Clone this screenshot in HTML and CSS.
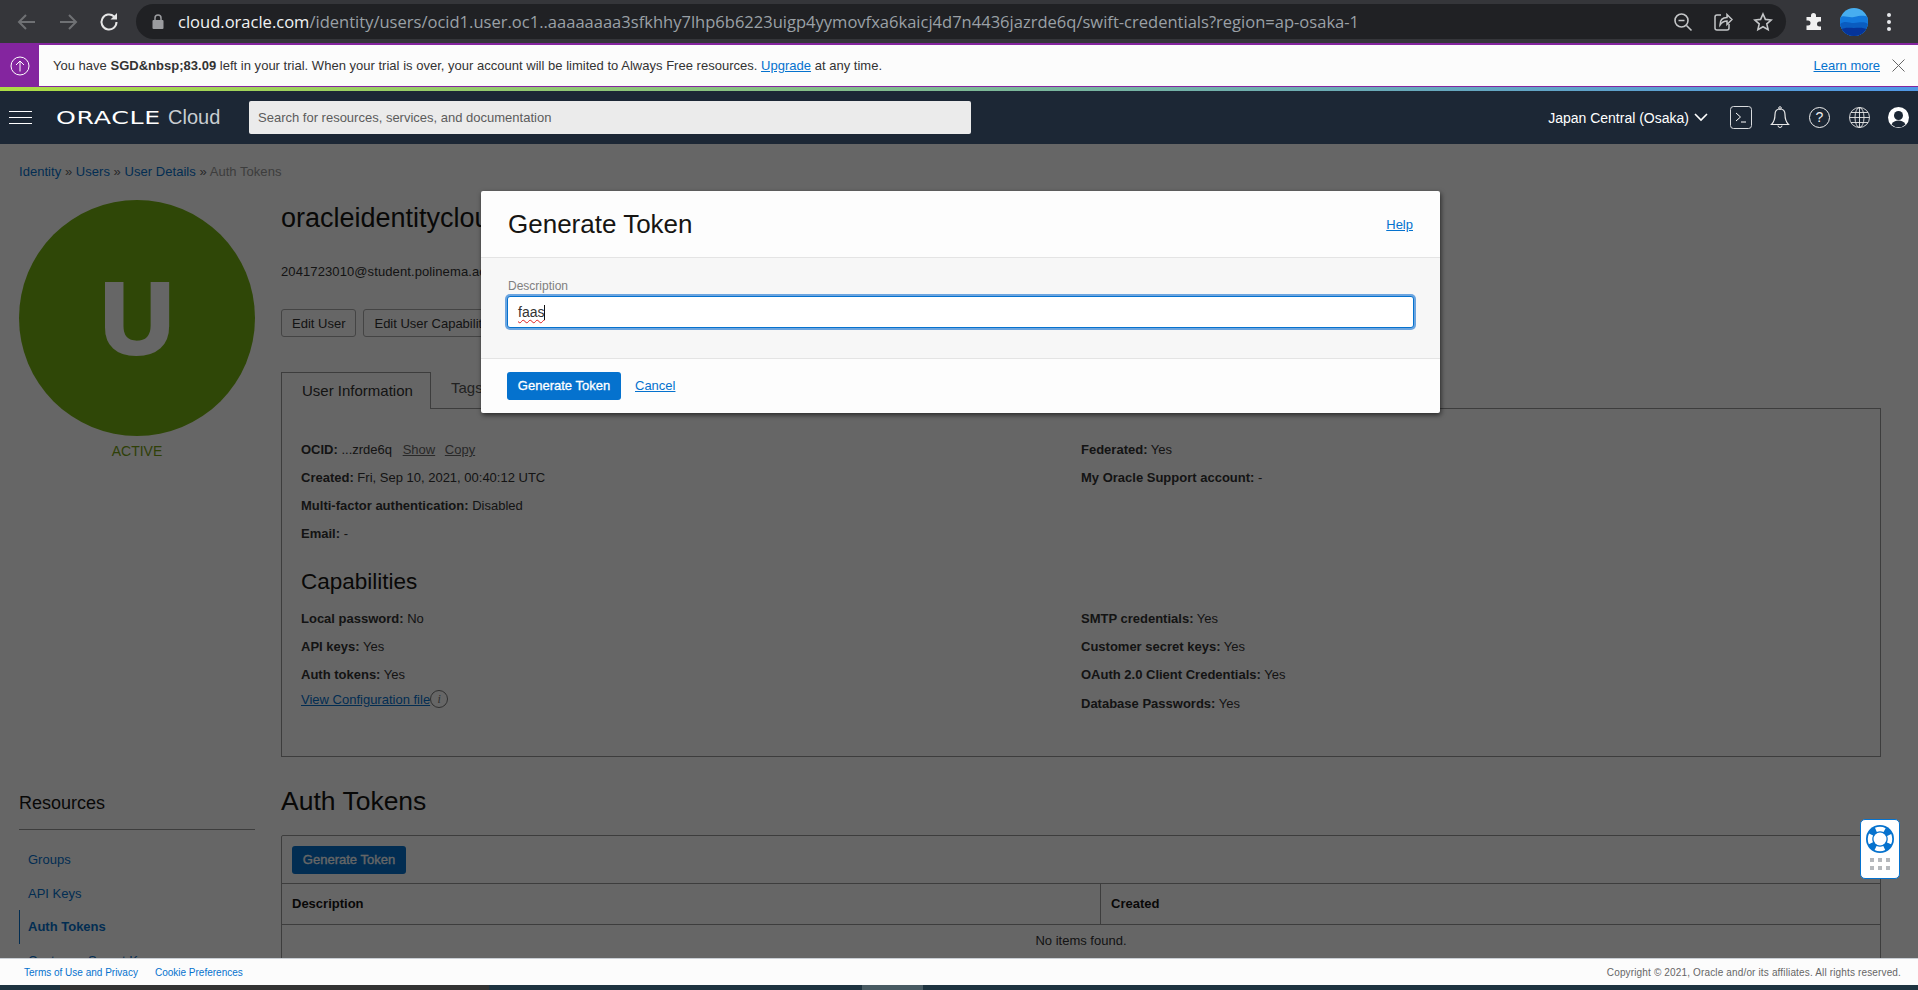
FILE: index.html
```html
<!DOCTYPE html>
<html lang="en">
<head>
  <meta charset="UTF-8" />
  <title>Auth Tokens - Oracle Cloud</title>
  <link rel="stylesheet" href="styles.css">
</head>
<body>

<div class="browser-bar">
  <svg class="bicon back" width="24" height="24" viewBox="0 0 24 24"><path d="M20 12H5M11 5l-7 7 7 7" fill="none" stroke="#6f7174" stroke-width="2"/></svg>
  <svg class="bicon forward" width="24" height="24" viewBox="0 0 24 24"><path d="M4 12h15M13 5l7 7-7 7" fill="none" stroke="#6f7174" stroke-width="2"/></svg>
  <svg class="bicon reload" width="24" height="24" viewBox="0 0 24 24"><path d="M19.5 12a7.5 7.5 0 1 1-2.4-5.5" fill="none" stroke="#e6e6e6" stroke-width="2"/><path d="M20 3v6.5h-6.500z" fill="#e6e6e6"/></svg>
  <div class="url-pill">
    <svg width="12" height="15" viewBox="0 0 12 15"><path d="M3 6V4a3 3 0 0 1 6 0v2" fill="none" stroke="#9b9c9f" stroke-width="1.500"/><rect x="0.500" y="6" width="11" height="9" rx="1" fill="#9b9c9f"/></svg>
    <div class="url"><span class="url-host">cloud.oracle.com</span>/identity/users/ocid1.user.oc1..aaaaaaaa3sfkhhy7lhp6b6223uigp4yymovfxa6kaicj4d7n4436jazrde6q/swift-credentials?region=ap-osaka-1</div>
    <svg class="pill-icon" width="20" height="20" viewBox="0 0 20 20"><circle cx="8.500" cy="8.500" r="6.500" fill="none" stroke="#c4c6c8" stroke-width="1.600"/><path d="M13.500 13.500l5 5M5.500 8.500h6" stroke="#c4c6c8" stroke-width="1.600"/></svg>
    <svg class="pill-icon" width="20" height="20" viewBox="0 0 20 20"><path d="M8 3H4a2 2 0 0 0-2 2v11a2 2 0 0 0 2 2h10a2 2 0 0 0 2-2v-4" fill="none" stroke="#c4c6c8" stroke-width="1.500"/><path d="M7 13c0-5 3-7.500 7-7.500V2.500l5 5-5 5V9c-3 0-5 1-7 4z" fill="none" stroke="#c4c6c8" stroke-width="1.500"/></svg>
    <svg class="pill-icon" width="20" height="20" viewBox="0 0 20 20"><path d="M10 2l2.400 5.400 5.800.6-4.400 3.900 1.300 5.700L10 14.700l-5.100 2.900 1.300-5.700L1.800 8l5.800-.6z" fill="none" stroke="#c4c6c8" stroke-width="1.600"/></svg>
  </div>
  <svg class="puzzle" width="20" height="20" viewBox="0 0 20 20"><path d="M7 3.500a2.500 2.500 0 0 1 5 0V5h5v4.500h-1.500a2.500 2.500 0 0 0 0 5H17V18H2.500v-4.500H4a2.500 2.500 0 0 0 0-5H2.500V5H7z" fill="#f1f1f1"/></svg>
  <svg class="profile" width="28" height="28" viewBox="0 0 28 28">
    <clipPath id="profile-clip"><circle cx="14" cy="14" r="14"/></clipPath>
    <g clip-path="url(#profile-clip)">
      <rect width="28" height="28" fill="#47aef0"/>
      <path d="M0 9c5-2 8 1 14 0s9-2 14 0v19H0z" fill="#1278dc"/>
      <path d="M0 16c5-4 9-1 14-1s9-2 14 1v12H0z" fill="#0a5cc0"/>
      <path d="M0 22c5-3 9-2 14-2s9-1 14 2v6H0z" fill="#05349a"/>
    </g>
  </svg>
  <div class="kebab"><i></i><i></i><i></i></div>
</div>

<div class="trial-banner">
  <div class="trial-icon">
    <svg width="20" height="20" viewBox="0 0 20 20"><circle cx="10" cy="10" r="9" fill="none" stroke="#fff" stroke-width="1"/><path d="M10 15.500V5M6 9l4-4 4 4" fill="none" stroke="#fff" stroke-width="1"/></svg>
  </div>
  <div class="trial-text">You have <b>SGD&amp;nbsp;83.09</b> left in your trial. When your trial is over, your account will be limited to Always Free resources. <a href="#">Upgrade</a> at any time.</div>
  <a class="learn-more" href="#">Learn more</a>
  <svg class="trial-close" width="13" height="13" viewBox="0 0 13 13"><path d="M.5.500l12 12M12.500.500l-12 12" stroke="#666" stroke-width="1"/></svg>
</div>
<div class="rainbow"></div>

<nav class="console-nav">
  <div class="hamburger"><i></i><i></i><i></i></div>
  <div class="logo"><span class="logo-oracle">ORACLE</span><span class="logo-cloud">Cloud</span></div>
  <input class="search" type="text" placeholder="Search for resources, services, and documentation" />
  <div class="region">Japan Central (Osaka)
    <svg width="14" height="9" viewBox="0 0 14 9"><path d="M1 1l6 6 6-6" fill="none" stroke="#fff" stroke-width="1.600"/></svg>
  </div>
  <svg class="nav-icon terminal" width="22" height="23" viewBox="0 0 22 23"><rect x=".5" y=".5" width="21" height="22" rx="3" fill="none" stroke="#d8dbde"/><path d="M6 7l4.500 4L6 15M11 16h5" fill="none" stroke="#fff"/></svg>
  <svg class="nav-icon bell" width="20" height="23" viewBox="0 0 20 23"><path d="M10 3c-3.500 0-5 2.500-5 5.500 0 5-1.500 8-3.500 10h17c-2-2-3.500-5-3.500-10C15 5.500 13.500 3 10 3z" fill="none" stroke="#e8e8e8" stroke-width="1.200"/><circle cx="10" cy="2" r="1.300" fill="none" stroke="#e8e8e8"/><path d="M8 19.500a2 2 0 0 0 4 0" fill="none" stroke="#e8e8e8"/></svg>
  <svg class="nav-icon" width="21" height="21" viewBox="0 0 21 21"><circle cx="10.500" cy="10.500" r="10" fill="none" stroke="#f0f0f0"/><text x="10.500" y="15" text-anchor="middle" class="help-mark">?</text></svg>
  <svg class="nav-icon" width="21" height="21" viewBox="0 0 21 21"><g fill="none" stroke="#e8e8e8" stroke-width=".9"><circle cx="10.500" cy="10.500" r="10"/><ellipse cx="10.500" cy="10.500" rx="4.500" ry="10"/><path d="M10.500.5v20M.5 10.500h20M2 5.500h17M2 15.500h17"/></g></svg>
  <svg class="nav-icon last" width="21" height="21" viewBox="0 0 21 21"><circle cx="10.500" cy="10.500" r="10.500" fill="#fff"/><circle cx="10.500" cy="8.500" r="4.500" fill="#1c2735"/><path d="M3.500 17.500c1.500-3 4-4 7-4s5.500 1 7 4a10 10 0 0 1-14 0z" fill="#1c2735"/></svg>
</nav>

<main class="page">
  <div class="breadcrumb"><a href="#">Identity</a> » <a href="#">Users</a> » <a href="#">User Details</a> » <span class="crumb-current">Auth Tokens</span></div>

  <section class="top-row">
    <div class="avatar-col">
      <div class="avatar">U</div>
      <div class="status">ACTIVE</div>
    </div>
    <div class="details">
      <h1>oracleidentitycloudservice/2041723010@student.polinema.ac.id</h1>
      <div class="email">2041723010@student.polinema.ac.id</div>
      <div class="actions">
        <button class="btn">Edit User</button>
        <button class="btn">Edit User Capabilities</button>
      </div>
      <div class="tabs">
        <div class="tab active">User Information</div>
        <div class="tab">Tags</div>
      </div>
      <div class="panel">
        <div class="info-grid">
          <div>
            <p><b>OCID:</b> ...zrde6q <a class="muted-link first" href="#">Show</a> <a class="muted-link" href="#">Copy</a></p>
            <p><b>Created:</b> Fri, Sep 10, 2021, 00:40:12 UTC</p>
            <p><b>Multi-factor authentication:</b> Disabled</p>
            <p><b>Email:</b> -</p>
          </div>
          <div>
            <p><b>Federated:</b> Yes</p>
            <p><b>My Oracle Support account:</b> -</p>
          </div>
        </div>
        <h3>Capabilities</h3>
        <div class="info-grid">
          <div>
            <p><b>Local password:</b> No</p>
            <p><b>API keys:</b> Yes</p>
            <p><b>Auth tokens:</b> Yes</p>
            <div class="config-line"><a href="#">View Configuration file</a><span class="info-i">i</span></div>
          </div>
          <div>
            <p><b>SMTP credentials:</b> Yes</p>
            <p><b>Customer secret keys:</b> Yes</p>
            <p><b>OAuth 2.0 Client Credentials:</b> Yes</p>
            <p class="db-row"><b>Database Passwords:</b> Yes</p>
          </div>
        </div>
      </div>
    </div>
  </section>

  <section class="bottom-row">
    <aside class="resources">
      <h4>Resources</h4>
      <ul>
        <li><a href="#">Groups</a></li>
        <li><a href="#">API Keys</a></li>
        <li class="current"><a href="#">Auth Tokens</a></li>
        <li><a href="#">Customer Secret Keys</a></li>
      </ul>
    </aside>
    <div class="tokens">
      <h2>Auth Tokens</h2>
      <div class="table-box">
        <div class="toolbar"><button class="btn primary">Generate Token</button></div>
        <table>
          <tr><th class="col-desc">Description</th><th>Created</th></tr>
          <tr><td colspan="2">No items found.</td></tr>
        </table>
      </div>
    </div>
  </section>

  <div class="overlay">
    <div class="modal">
      <div class="modal-head">
        <div class="modal-title">Generate Token</div>
        <a href="#">Help</a>
      </div>
      <div class="modal-body">
        <label>Description</label>
        <div class="text-field"><span class="typed">faas</span><span class="caret"></span></div>
      </div>
      <div class="modal-foot">
        <button class="btn primary">Generate Token</button>
        <a class="cancel" href="#">Cancel</a>
      </div>
    </div>
  </div>

  <div class="help-widget">
    <svg width="28" height="28" viewBox="0 0 28 28">
      <circle cx="14" cy="14" r="14" fill="#0572ce"/>
      <circle cx="14" cy="14" r="10" fill="none" stroke="#fff" stroke-width="4.500" stroke-dasharray="9 6.700" stroke-dashoffset="4.500"/>
      <circle cx="14" cy="14" r="6.500" fill="#fff"/>
    </svg>
    <div class="grip"><i></i><i></i><i></i><i></i><i></i><i></i></div>
  </div>
</main>

<footer class="page-foot">
  <a href="#">Terms of Use and Privacy</a>
  <a href="#">Cookie Preferences</a>
  <span class="copyright">Copyright © 2021, Oracle and/or its affiliates. All rights reserved.</span>
</footer>
<div class="desktop-strip"></div>

</body>
</html>
```

FILE: styles.css
```css
html, body {
  height: 990px;
  margin: 0;
  overflow: hidden;
}
body {
  display: flex;
  flex-direction: column;
  font-family: 'Liberation Sans', Arial, sans-serif;
  font-size: 13px;
  color: #333;
  background: #fff;
}
a {
  color: #0572ce;
}

/* browser chrome */
.browser-bar {
  height: 43px;
  flex: none;
  display: flex;
  align-items: center;
  background: #35363a;
  box-sizing: border-box;
  padding-left: 15px;
}
.bicon {
  margin-right: 17px;
}
.url-pill {
  width: 1650px;
  height: 35px;
  margin-left: -2px;
  display: flex;
  align-items: center;
  border-radius: 18px;
  background: #202124;
  box-sizing: border-box;
  padding: 0 13px 0 16px;
}
.url {
  flex: 1;
  margin-left: 14px;
  font-family: 'Open Sans', sans-serif;
  font-size: 16.550px;
  color: #9aa0a6;
  white-space: nowrap;
}
.url-host {
  color: #f1f3f4;
}
.pill-icon {
  margin-left: 20px;
}
.puzzle {
  margin-left: 18px;
}
.profile {
  margin-left: 16px;
}
.kebab {
  margin-left: 19px;
  display: flex;
  flex-direction: column;
  gap: 3px;
}
.kebab i {
  width: 4px;
  height: 4px;
  border-radius: 50%;
  background: #e8eaed;
}

/* trial banner */
.trial-banner {
  height: 44px;
  flex: none;
  box-sizing: border-box;
  display: flex;
  align-items: center;
  border-top: 2px solid #84259f;
  border-bottom: 1px solid #84259f;
  background: #fcfcfc;
  padding-right: 13px;
}
.trial-icon {
  width: 39px;
  height: 100%;
  display: flex;
  align-items: center;
  justify-content: center;
  background: #84259f;
}
.trial-text {
  margin-left: 14px;
  flex: 1;
  letter-spacing: .015px;
}
.learn-more {
  margin-right: 12px;
}
.rainbow {
  height: 4px;
  flex: none;
  background: linear-gradient(90deg, #acdc45, #4f97e6);
}

/* console header */
.console-nav {
  height: 53px;
  flex: none;
  display: flex;
  align-items: center;
  background: #1c2735;
  padding: 0 9px;
}
.hamburger {
  width: 23px;
  display: flex;
  flex-direction: column;
  gap: 5px;
}
.hamburger i {
  height: 1px;
  background: #fff;
}
.logo {
  margin-left: 24px;
  width: 193px;
  display: flex;
  align-items: center;
  white-space: nowrap;
}
.logo-oracle {
  display: inline-block;
  width: 112px;
  font-family: 'DejaVu Sans', sans-serif;
  font-size: 18px;
  letter-spacing: .5px;
  color: #fff;
  transform: scaleX(1.4);
  transform-origin: left;
}
.logo-cloud {
  font-size: 20px;
  color: #c9cdd1;
}
.search {
  width: 722px;
  height: 33px;
  box-sizing: border-box;
  border: 0;
  border-radius: 2px;
  background: #ebebeb;
  padding: 0 9px;
  font: 13px 'Liberation Sans', sans-serif;
}
.search::placeholder {
  color: #5c5c5c;
}
.region {
  margin-left: auto;
  display: flex;
  align-items: center;
  gap: 5px;
  color: #fff;
  font-size: 14px;
}
.nav-icon {
  margin-left: 19px;
}
.nav-icon.terminal {
  margin-left: 22px;
}
.nav-icon.bell {
  margin-left: 18px;
}
.nav-icon.last {
  margin-left: 18px;
}
.help-mark {
  font: 14px 'Liberation Sans', sans-serif;
  fill: #f0f0f0;
}

/* dimmed page */
.page {
  position: relative;
  flex: 1;
  min-height: 0;
  overflow: hidden;
  padding: 19px 37px 0 19px;
}
.breadcrumb {
  line-height: 18px;
  letter-spacing: .04px;
  color: #666;
}
.breadcrumb a {
  text-decoration: none;
}
.crumb-current {
  color: #999;
}
.top-row {
  display: grid;
  grid-template-columns: 236px 1fr;
  column-gap: 26px;
  margin-top: 19px;
}
.avatar {
  width: 236px;
  height: 236px;
  border-radius: 50%;
  background: #76b212;
  color: #fff;
  font-size: 100px;
  font-weight: bold;
  -webkit-text-stroke: 4px #fff;
  line-height: 236px;
  text-align: center;
}
.status {
  margin-top: 7px;
  text-align: center;
  font-size: 14px;
  color: #76a012;
}
h1 {
  margin: 0;
  font-size: 27px;
  font-weight: normal;
  line-height: 36px;
  color: #161513;
  white-space: nowrap;
}
.email {
  margin-top: 26px;
  line-height: 20px;
  letter-spacing: .1px;
}
.actions {
  margin-top: 27px;
  display: flex;
  gap: 7px;
}
.btn {
  height: 28px;
  padding: 0 10px;
  border: 1px solid #aaa;
  border-radius: 3px;
  background: #fff;
  color: #333;
  font: 13px 'Liberation Sans', sans-serif;
}
.btn.primary {
  width: 114px;
  padding: 0 0 2px;
  border: 0;
  background: #0572ce;
  color: #fff;
  -webkit-text-stroke: .3px #fff;
}
.tabs {
  margin-top: 35px;
  display: flex;
  height: 36px;
}
.tab {
  padding-left: 20px;
  line-height: 32px;
  font-size: 15px;
  color: #555;
  white-space: nowrap;
}
.tab.active {
  width: 150px;
  box-sizing: border-box;
  height: 37px;
  border: 1px solid #999;
  border-bottom: 0;
  background: #fff;
  line-height: 35px;
  color: #333;
  position: relative;
}
.panel {
  height: 349px;
  box-sizing: border-box;
  border: 1px solid #999;
  padding: 27px 19px 0;
}
.info-grid {
  display: grid;
  grid-template-columns: 780px 1fr;
}
.info-grid p {
  margin: 0;
  line-height: 28px;
}
.info-grid p.db-row {
  margin-top: 1px;
}
.muted-link {
  color: #666;
  margin-left: 6px;
}
.muted-link.first {
  margin-left: 7px;
}
h3 {
  margin: 16px 0 5px;
  font-size: 22.500px;
  font-weight: normal;
  line-height: 36px;
  color: #161513;
}
.config-line {
  display: flex;
  align-items: center;
  height: 20px;
}
.info-i {
  width: 16px;
  height: 16px;
  border: 1px solid #777;
  border-radius: 50%;
  text-align: center;
  font: italic 12px/16px 'Liberation Serif', serif;
  color: #777;
}

/* resources and table */
.bottom-row {
  display: grid;
  grid-template-columns: 236px 1fr;
  column-gap: 26px;
  margin-top: 26px;
}
.resources h4 {
  margin: 1px 0 0;
  padding-bottom: 7px;
  border-bottom: 1px solid #999;
  font-size: 18px;
  font-weight: normal;
  line-height: 38px;
  color: #161513;
}
.resources ul {
  margin: 13px 0 0;
  padding: 0;
  list-style: none;
}
.resources li {
  height: 34px;
  line-height: 34px;
  padding-left: 8px;
  border-left: 1px solid transparent;
}
.resources li a {
  text-decoration: none;
}
.resources li.current {
  margin-top: -1px;
  margin-bottom: 0;
  border-left-color: #0572ce;
  font-weight: bold;
}
h2 {
  margin: 0 0 16px;
  font-size: 26.500px;
  font-weight: normal;
  line-height: 36px;
  color: #161513;
}
.table-box {
  border: 1px solid #999;
  border-radius: 2px 2px 0 0;
}
.toolbar {
  padding: 10px 10px 9px 10px;
  display: flex;
}
table {
  width: 100%;
  border-collapse: collapse;
}
th {
  height: 38px;
  padding: 0 10px 2px;
  border-top: 1px solid #999;
  border-bottom: 1px solid #999;
  text-align: left;
  color: #161513;
}
th.col-desc {
  width: 798px;
  border-right: 1px solid #999;
}
td {
  height: 28px;
  padding-bottom: 6px;
  text-align: center;
}

/* modal */
.overlay {
  position: absolute;
  inset: 0;
  padding: 47px 0 0 481px;
  background: rgba(0, 0, 0, .6);
}
.modal {
  width: 959px;
  height: 222px;
  display: flex;
  flex-direction: column;
  background: #fdfdfd;
  border-radius: 2px;
  box-shadow: 1px 2px 5px rgba(0, 0, 0, .6);
}
.modal-head {
  height: 67px;
  flex: none;
  box-sizing: border-box;
  display: flex;
  align-items: center;
  justify-content: space-between;
  padding: 0 27px;
  border-bottom: 1px solid #e4e4e4;
}
.modal-title {
  font-size: 26px;
  color: #161513;
}
.modal-body {
  height: 101px;
  flex: none;
  box-sizing: border-box;
  padding: 20px 26px 0;
  background: #f7f7f7;
  border-bottom: 1px solid #e4e4e4;
}
.modal-body label {
  display: block;
  padding-left: 1px;
  line-height: 17px;
  font-size: 12px;
  color: #808080;
}
.text-field {
  height: 30px;
  box-sizing: content-box;
  margin-top: 1px;
  padding-left: 10px;
  display: flex;
  align-items: center;
  border: 1px solid #0572ce;
  border-radius: 3px;
  background: #fff;
  box-shadow: 0 0 0 2px #6ca5e0;
  font-size: 14px;
  color: #333;
}
.typed {
  text-decoration: underline wavy #e02020 1px;
  text-underline-offset: 2px;
}
.caret {
  width: 1px;
  height: 15px;
  background: #111;
}
.modal-foot {
  flex: 1;
  display: flex;
  align-items: center;
  gap: 14px;
  padding: 0 26px;
}
.cancel {
  margin-bottom: 2px;
}

.help-widget {
  position: absolute;
  top: 675px;
  left: 1860px;
  width: 40px;
  height: 60px;
  box-sizing: border-box;
  display: flex;
  flex-direction: column;
  align-items: center;
  gap: 5px;
  padding-top: 5px;
  border: 1px solid #0572ce;
  border-radius: 5px;
  background: #fff;
}
.grip {
  display: grid;
  grid-template-columns: repeat(3, 4px);
  gap: 4px;
}
.grip i {
  height: 4px;
  background: #b5b8bc;
}

/* footer */
.page-foot {
  height: 27px;
  flex: none;
  box-sizing: border-box;
  display: flex;
  align-items: center;
  gap: 17px;
  padding: 0 17px 0 24px;
  border-top: 1px solid #c9ced4;
  background: #fcfcfc;
  font-size: 10px;
}
.page-foot a {
  text-decoration: none;
}
.copyright {
  margin-left: auto;
  letter-spacing: .15px;
  color: #666;
}
.desktop-strip {
  height: 5px;
  flex: none;
  background: linear-gradient(90deg, #1e3340 60px, #333 60px, #333 489px, #1e3340 489px, #1e3340 862px, #485a62 862px, #485a62 923px, #1e3340 923px);
}
```
